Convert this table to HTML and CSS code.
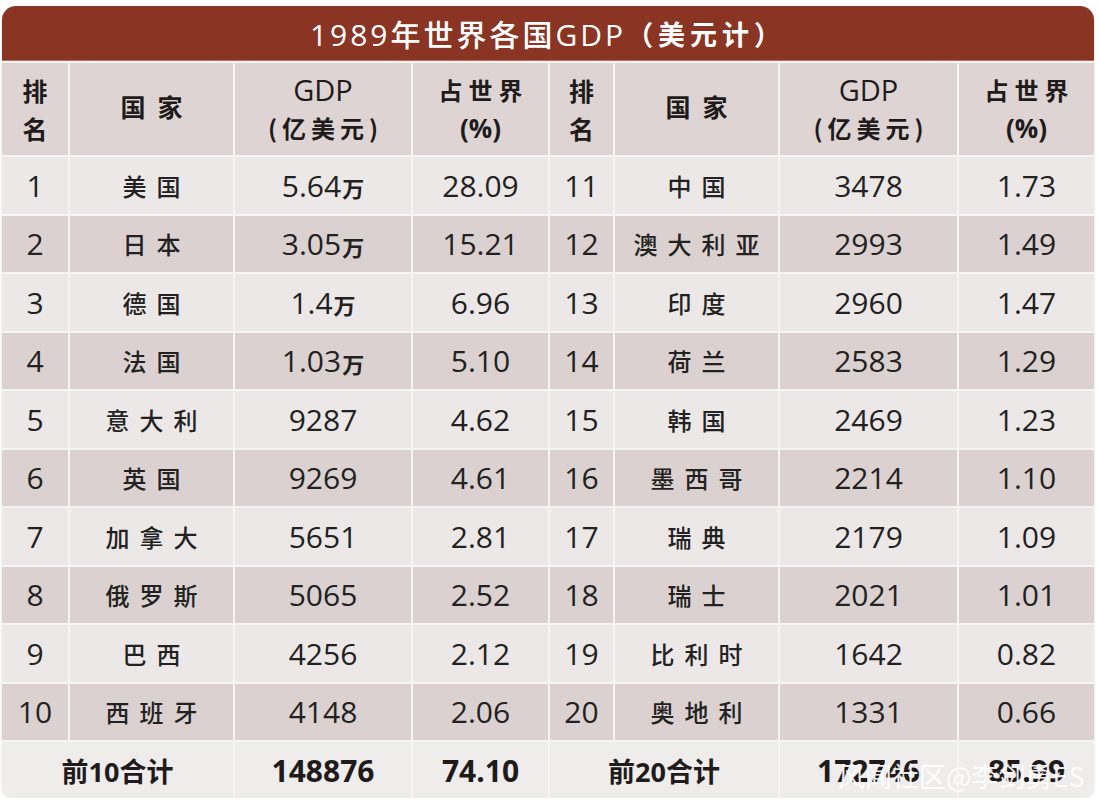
FILE: index.html
```html
<!DOCTYPE html>
<html lang="zh-CN">
<head>
<meta charset="utf-8">
<title>1989年世界各国GDP</title>
<link rel="stylesheet" href="styles.css">
</head>
<body>
<div class="card">
  <div class="title">1989年世界各国GDP<span class="paren">（美元计）</span></div>
  <div class="grid">
    <div class="cell head rank">排<br>名</div>
    <div class="cell head cn">国家</div>
    <div class="cell head"><span class="gdp">GDP</span><span class="unit">(亿美元)</span></div>
    <div class="cell head"><span class="share">占世界</span><span class="pct">(%)</span></div>
    <div class="cell head rank">排<br>名</div>
    <div class="cell head cn">国家</div>
    <div class="cell head"><span class="gdp">GDP</span><span class="unit">(亿美元)</span></div>
    <div class="cell head"><span class="share">占世界</span><span class="pct">(%)</span></div>

    <div class="cell odd num">1</div><div class="cell odd name">美国</div><div class="cell odd num">5.64<span class="wan">万</span></div><div class="cell odd num">28.09</div>
    <div class="cell odd num">11</div><div class="cell odd name">中国</div><div class="cell odd num">3478</div><div class="cell odd num">1.73</div>

    <div class="cell even num">2</div><div class="cell even name">日本</div><div class="cell even num">3.05<span class="wan">万</span></div><div class="cell even num">15.21</div>
    <div class="cell even num">12</div><div class="cell even name">澳大利亚</div><div class="cell even num">2993</div><div class="cell even num">1.49</div>

    <div class="cell odd num">3</div><div class="cell odd name">德国</div><div class="cell odd num">1.4<span class="wan">万</span></div><div class="cell odd num">6.96</div>
    <div class="cell odd num">13</div><div class="cell odd name">印度</div><div class="cell odd num">2960</div><div class="cell odd num">1.47</div>

    <div class="cell even num">4</div><div class="cell even name">法国</div><div class="cell even num">1.03<span class="wan">万</span></div><div class="cell even num">5.10</div>
    <div class="cell even num">14</div><div class="cell even name">荷兰</div><div class="cell even num">2583</div><div class="cell even num">1.29</div>

    <div class="cell odd num">5</div><div class="cell odd name">意大利</div><div class="cell odd num">9287</div><div class="cell odd num">4.62</div>
    <div class="cell odd num">15</div><div class="cell odd name">韩国</div><div class="cell odd num">2469</div><div class="cell odd num">1.23</div>

    <div class="cell even num">6</div><div class="cell even name">英国</div><div class="cell even num">9269</div><div class="cell even num">4.61</div>
    <div class="cell even num">16</div><div class="cell even name">墨西哥</div><div class="cell even num">2214</div><div class="cell even num">1.10</div>

    <div class="cell odd num">7</div><div class="cell odd name">加拿大</div><div class="cell odd num">5651</div><div class="cell odd num">2.81</div>
    <div class="cell odd num">17</div><div class="cell odd name">瑞典</div><div class="cell odd num">2179</div><div class="cell odd num">1.09</div>

    <div class="cell even num">8</div><div class="cell even name">俄罗斯</div><div class="cell even num">5065</div><div class="cell even num">2.52</div>
    <div class="cell even num">18</div><div class="cell even name">瑞士</div><div class="cell even num">2021</div><div class="cell even num">1.01</div>

    <div class="cell odd num">9</div><div class="cell odd name">巴西</div><div class="cell odd num">4256</div><div class="cell odd num">2.12</div>
    <div class="cell odd num">19</div><div class="cell odd name">比利时</div><div class="cell odd num">1642</div><div class="cell odd num">0.82</div>

    <div class="cell even num">10</div><div class="cell even name">西班牙</div><div class="cell even num">4148</div><div class="cell even num">2.06</div>
    <div class="cell even num">20</div><div class="cell even name">奥地利</div><div class="cell even num">1331</div><div class="cell even num">0.66</div>

    <div class="cell total span2 label">前10合计</div><div class="cell total tnum">148876</div><div class="cell total tnum">74.10</div>
    <div class="cell total span2 label">前20合计</div><div class="cell total tnum">172746</div><div class="cell total tnum">85.99</div>
  </div>
  <div class="watermark">风闻社区@李剑勇ES</div>
</div>
</body>
</html>
```

FILE: styles.css
```css
html, body {
  margin: 0;
  padding: 0;
  background: #ffffff;
}

body {
  font-family: "Open Sans", "Noto Sans CJK SC", sans-serif;
  color: #1f1b1b;
}

.card {
  position: relative;
  width: 1092px;
  margin: 6px 0 0 2px;
  background: #f7f4f4;
  border-radius: 14px 14px 12px 12px;
  overflow: hidden;
  box-shadow: 0 1px 3px rgba(0, 0, 0, 0.12);
}

.title {
  height: 54px;
  background: #8a3524;
  border-bottom: 1px solid #c06a55;
  color: #ffffff;
  display: flex;
  align-items: center;
  justify-content: center;
  font-family: "Open Sans", "Noto Sans CJK SC", sans-serif;
  font-size: 30px;
  font-weight: 500;
  letter-spacing: 3px;
}

.title .paren {
  font-family: "Noto Sans CJK SC", sans-serif;
  font-size: 27px;
  font-weight: 700;
  letter-spacing: 5px;
}

.grid {
  display: grid;
  grid-template-columns: 66px 163px 176px 135px 63px 163px 177px 135px;
  grid-template-rows: 92px repeat(10, 56.5px) 56px;
  column-gap: 2px;
  row-gap: 2px;
  padding-top: 2px;
}

.cell {
  display: flex;
  align-items: center;
  justify-content: center;
  text-align: center;
}

.head {
  background: #ddd4d3;
  flex-direction: column;
  font-family: "Noto Sans CJK SC", sans-serif;
  font-weight: 700;
  line-height: 1.45;
}

.head.rank {
  font-size: 25px;
  line-height: 38px;
}

.head.cn {
  font-size: 25px;
  letter-spacing: 12px;
  padding-left: 12px;
  padding-bottom: 6px;
}

.gdp {
  font-family: "Open Sans", sans-serif;
  font-size: 29px;
  font-weight: 500;
  line-height: 38px;
}

.unit {
  font-size: 24px;
  letter-spacing: 5px;
  padding-left: 5px;
  line-height: 38px;
}

.share {
  font-size: 24px;
  letter-spacing: 6px;
  padding-left: 6px;
  line-height: 38px;
}

.pct {
  font-family: "Open Sans", "Noto Sans CJK SC", sans-serif;
  font-size: 26px;
  line-height: 38px;
}

.odd {
  background: #ece8e7;
}

.even {
  background: #dbd1d0;
}

.num {
  font-family: "Open Sans", sans-serif;
  font-size: 30px;
  font-weight: 400;
  color: #222;
}

.wan {
  font-family: "Noto Sans CJK SC", sans-serif;
  font-size: 22px;
  font-weight: 700;
  margin-left: 1px;
  position: relative;
  top: 2px;
}

.name {
  font-family: "Noto Sans CJK SC", sans-serif;
  font-size: 24px;
  font-weight: 500;
  letter-spacing: 10px;
  padding-left: 10px;
  color: #222;
}

.total {
  background: #efecec;
}

.span2 {
  grid-column: span 2;
}

.label {
  font-family: "Open Sans", "Noto Sans CJK SC", sans-serif;
  font-size: 27px;
  font-weight: 700;
}

.tnum {
  font-family: "Open Sans", sans-serif;
  font-size: 30px;
  font-weight: 700;
}

.watermark {
  position: absolute;
  left: 836px;
  bottom: 3px;
  font-family: "Noto Sans CJK SC", sans-serif;
  font-size: 27px;
  font-weight: 400;
  color: rgba(255, 255, 255, 0.92);
  white-space: nowrap;
}
```
